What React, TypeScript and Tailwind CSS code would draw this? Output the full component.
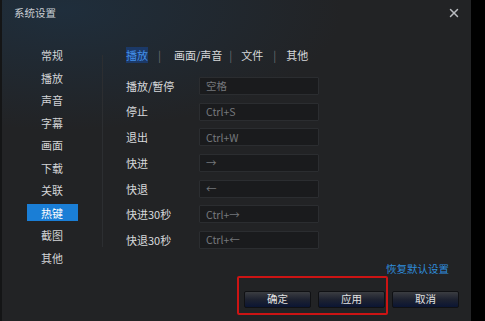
import { X } from "lucide-react";

const menuItems = ["常规", "播放", "声音", "字幕", "画面", "下载", "关联", "热键", "截图", "其他"];

const hotkeys = [
  { label: "播放/暂停", value: "空格" },
  { label: "停止", value: "Ctrl+S" },
  { label: "退出", value: "Ctrl+W" },
  { label: "快进", value: "→" },
  { label: "快退", value: "←" },
  { label: "快进30秒", value: "Ctrl+→" },
  { label: "快退30秒", value: "Ctrl+←" },
];

function DialogButton({ label }: { label: string }) {
  return (
    <button className="h-[17px] w-[67px] rounded-[2px] border border-[#101114] bg-gradient-to-b from-[#3b3d41] via-[#1e2230] to-[#0b1533] text-[10.5px] leading-none text-[#e2e2e2]">
      {label}
    </button>
  );
}

export default function App() {
  return (
    <div
      className="flex h-[321px] w-[485px] bg-black text-[11px]"
      style={{ fontFamily: '"Noto Sans CJK SC", "Liberation Sans", sans-serif' }}
    >
      {/* Dialog */}
      <div className="relative flex h-full w-[471px] flex-col border-l-2 border-[#141516] bg-[#222325] bg-[radial-gradient(ellipse_280px_120px_at_60px_10px,#1f2e3c,transparent)]">
        {/* Title bar */}
        <div className="flex h-[26px] items-center justify-between pl-[12px] pr-[10px]">
          <span className="text-[10.5px] text-[#c9ced4]">系统设置</span>
          <X size={14} strokeWidth={2.5} className="text-[#b9bcc0]" />
        </div>

        {/* Body */}
        <div className="flex flex-1 pt-[18px]">
          {/* Sidebar */}
          <div className="flex w-[101px] items-start">
            <div className="flex w-[100px] flex-col items-center">
              {menuItems.map((item) => (
                <div key={item} className="flex h-[22.5px] w-full items-center justify-center">
                  <span
                    className={
                      item === "热键"
                        ? "flex h-[17px] w-[51px] items-center justify-center bg-[#1a7ed6] text-white"
                        : "text-[#d2d4d6]"
                    }
                  >
                    {item}
                  </span>
                </div>
              ))}
            </div>
            <div className="mt-[11px] h-[192px] w-px bg-[#2c2e31]" />
          </div>

          {/* Content */}
          <div className="ml-[23px] flex flex-1 flex-col">
            {/* Tabs */}
            <div className="flex h-[22px] items-center text-[#d6d8da]">
              <span className="bg-[#1b3968] text-[#4390e8]">播放</span>
              <span className="ml-[10px] text-[#6a6c70]">|</span>
              <span className="ml-[13px]">画面/声音</span>
              <span className="ml-[7px] text-[#6a6c70]">|</span>
              <span className="ml-[9px]">文件</span>
              <span className="ml-[10px] text-[#6a6c70]">|</span>
              <span className="ml-[10px]">其他</span>
            </div>

            {/* Hotkey rows */}
            <div className="mt-[11px] flex flex-col gap-[7.7px]">
              {hotkeys.map((row) => (
                <div key={row.label} className="flex h-[18px] items-center">
                  <span className="w-[73px] text-[#d8dadc]">{row.label}</span>
                  <div className="flex h-[18px] w-[120px] items-center rounded-[1px] border border-[#2b2d30] bg-[#1a1b1d] px-[6px] text-[10.5px] text-[#75787c]">
                    {row.value}
                  </div>
                </div>
              ))}
            </div>

            {/* Restore default */}
            <div className="mt-[13px] flex h-[14px] items-center justify-end pr-[22px]">
              <span className="text-[10.5px] text-[#2f8ddc]">恢复默认设置</span>
            </div>

            {/* Buttons */}
            <div className="mt-[15px] flex justify-end gap-[7px] pr-[12px]">
              <DialogButton label="确定" />
              <DialogButton label="应用" />
              <DialogButton label="取消" />
            </div>
          </div>
        </div>

        {/* Annotation box */}
        <div className="pointer-events-none absolute left-[235px] top-[276px] h-[39px] w-[151px] rounded-[2px] border-2 border-[#cc1414]" />
      </div>
    </div>
  );
}
